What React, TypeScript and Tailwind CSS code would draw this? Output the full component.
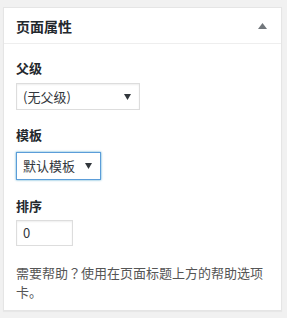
const font = { fontFamily: '"Noto Sans CJK SC", "Noto Sans", sans-serif' }

function Caret() {
  return (
    <svg className="w-[7px] h-[6px] shrink-0" viewBox="0 0 7 6">
      <path d="M0 0h7L3.5 6z" fill="#32373c" />
    </svg>
  )
}

function FakeSelect({ label, w, focused }: { label: string; w: string; focused?: boolean }) {
  return (
    <div className={`${w} flex items-center justify-between pl-[6px] pr-[8px] bg-white text-[13px] text-[#32373c] border ${focused ? 'h-[28px] border-[#5b9dd9] shadow-[0_0_2px_rgba(30,140,190,0.8)]' : 'h-[27px] border-[#ddd] shadow-[inset_0_1px_2px_rgba(0,0,0,0.07)]'}`}>
      <span>{label}</span>
      <Caret />
    </div>
  )
}

export default function App() {
  return (
    <div className="w-[287px] h-[318px] bg-[#f1f1f1] pt-[7px] pl-[3px]" style={font}>
      <div className="w-[279px] bg-white border border-[#e5e5e5] shadow-[0_1px_1px_rgba(0,0,0,0.04)]">
        {/* Header */}
        <div className="h-[36px] flex items-center justify-between pl-[12px] pr-[14px] border-b border-[#eee]">
          <h2 className="text-[14px] font-bold text-[#23282d] leading-none">页面属性</h2>
          <svg className="w-[9px] h-[6px]" viewBox="0 0 9 6">
            <path d="M4.5 0L9 6H0z" fill="#72777c" />
          </svg>
        </div>

        {/* Body */}
        <div className="pl-[12px] pr-[12px] pt-[14px] pb-[9px] text-[13px] text-[#444]">
          <p className="font-bold text-[#23282d] leading-[20px] mb-[5px]">父级</p>
          <FakeSelect label="(无父级)" w="w-[124px]" />

          <p className="font-bold text-[#23282d] leading-[20px] mt-[15px] mb-[7px]">模板</p>
          <FakeSelect label="默认模板" w="w-[85px]" focused />

          <p className="font-bold text-[#23282d] leading-[20px] mt-[16px] mb-[4px]">排序</p>
          <div className="w-[57px] h-[26px] flex items-center pl-[6px] border border-[#ddd] shadow-[inset_0_1px_2px_rgba(0,0,0,0.07)] text-[13px] text-[#32373c]">0</div>

          <p className="mt-[17px] leading-[19px] text-[#555]">
            需要帮助<span style={{ fontFamily: '"Noto Sans CJK JP", sans-serif' }}>？</span>使用在页面标题上方的帮助选项卡。
          </p>
        </div>
      </div>
    </div>
  )
}
